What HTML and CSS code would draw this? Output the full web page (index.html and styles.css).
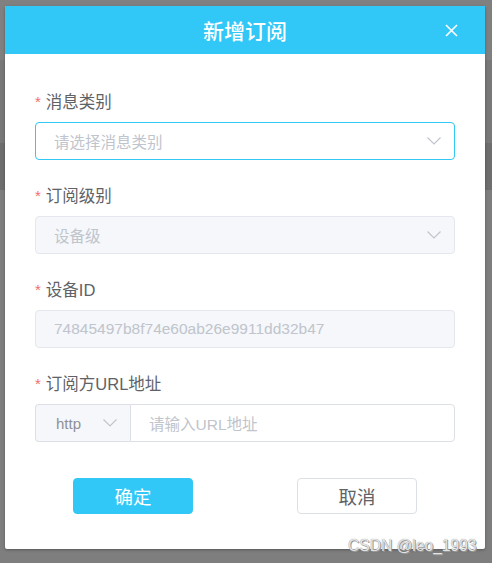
FILE: index.html
```html
<!DOCTYPE html>
<html lang="zh-CN">
<head>
    <meta charset="UTF-8">
    <meta name="viewport" content="width=device-width, initial-scale=1.0">
    <title>新增订阅</title>
    <link rel="stylesheet" href="styles.css">
</head>
<body>

    <div class="dialog">
        <div class="dialog-header">
            <span class="dialog-title">新增订阅</span>
            <button type="button" class="dialog-close" aria-label="关闭">
                <svg width="13" height="13" viewBox="0 0 13 13"><path d="M1 1L12 12M12 1L1 12" stroke="#fff" stroke-width="1.6" fill="none"/></svg>
            </button>
        </div>

        <form class="dialog-body" id="subscribeForm">
            <div class="form-item">
                <label class="form-label"><span class="star">*</span>消息类别</label>
                <div class="select is-focus">
                    <span class="placeholder">请选择消息类别</span>
                    <svg class="arrow" width="14" height="8" viewBox="0 0 14 8"><polyline points="0.5,0.5 7,7 13.5,0.5" fill="none" stroke="#c0c4cc" stroke-width="1.2"/></svg>
                </div>
            </div>

            <div class="form-item">
                <label class="form-label"><span class="star">*</span>订阅级别</label>
                <div class="select is-disabled">
                    <span class="placeholder">设备级</span>
                    <svg class="arrow" width="14" height="8" viewBox="0 0 14 8"><polyline points="0.5,0.5 7,7 13.5,0.5" fill="none" stroke="#c0c4cc" stroke-width="1.2"/></svg>
                </div>
            </div>

            <div class="form-item">
                <label class="form-label"><span class="star">*</span>设备ID</label>
                <div class="input is-disabled">
                    <span class="placeholder">74845497b8f74e60ab26e9911dd32b47</span>
                </div>
            </div>

            <div class="form-item">
                <label class="form-label"><span class="star">*</span>订阅方URL地址</label>
                <div class="input-group">
                    <div class="prepend">
                        <span class="prepend-text">http</span>
                        <svg class="arrow" width="14" height="8" viewBox="0 0 14 8"><polyline points="0.5,0.5 7,7 13.5,0.5" fill="none" stroke="#c0c4cc" stroke-width="1.2"/></svg>
                    </div>
                    <div class="input group-input">
                        <span class="placeholder">请输入URL地址</span>
                    </div>
                </div>
            </div>

            <div class="dialog-footer">
                <button type="button" class="btn btn-primary">确定</button>
                <button type="button" class="btn">取消</button>
            </div>
        </form>
    </div>

    <div class="watermark">CSDN @leo_1993</div>

</body>
</html>
```

FILE: styles.css
```css
* {
    box-sizing: border-box;
}
body {
    margin: 0;
    padding: 6px 0 0 5px;
    height: 563px;
    overflow: hidden;
    position: relative;
    font-family: "Liberation Sans", "Noto Sans CJK SC", sans-serif;
    background: linear-gradient(to bottom, #808080 0, #808080 60px, #787878 60px, #787878 143px, #6e6e6e 143px, #6e6e6e 190px, #7e7e7e 190px);
}
.dialog {
    width: 480px;
    background-color: #fff;
    border-radius: 2px;
    box-shadow: 0 1px 3px rgba(0, 0, 0, 0.3);
}
.dialog-header {
    height: 48px;
    background-color: #31c7f7;
    display: flex;
    align-items: center;
    justify-content: center;
    position: relative;
}
.dialog-title {
    color: #fff;
    font-size: 21px;
    font-weight: 500;
}
.dialog-close {
    position: absolute;
    right: 27px;
    top: 18px;
    padding: 0;
    border: none;
    background: none;
    line-height: 0;
    cursor: pointer;
}
.dialog-body {
    padding: 38px 30px 35px;
}
.form-item {
    margin-bottom: 26px;
}
.form-label {
    display: block;
    height: 20px;
    line-height: 20px;
    margin-bottom: 10px;
    font-size: 16.5px;
    color: #606266;
}
.star {
    color: #f56c6c;
    margin-right: 5px;
    font-size: 15px;
    vertical-align: 1px;
}
.select, .input {
    height: 38px;
    border: 1px solid #dcdfe6;
    border-radius: 4px;
    padding: 0 13px 0 18px;
    display: flex;
    align-items: center;
    justify-content: space-between;
    font-size: 15.5px;
}
.select.is-focus {
    border-color: #31c7f7;
}
.is-disabled {
    background-color: #f5f7fa;
    border-color: #e4e7ed;
}
.placeholder {
    color: #c0c4cc;
}
.input-group {
    display: flex;
    height: 38px;
}
.prepend {
    width: 95px;
    flex-shrink: 0;
    background-color: #f5f7fa;
    border: 1px solid #dcdfe6;
    border-right: none;
    border-radius: 4px 0 0 4px;
    display: flex;
    align-items: center;
    padding: 0 13px 0 20px;
    justify-content: space-between;
}
.prepend-text {
    font-size: 15px;
    color: #8e9096;
}
.group-input {
    flex: 1;
    border-radius: 0 4px 4px 0;
}
.dialog-footer {
    margin-top: 36px;
    padding: 0 38px;
    display: flex;
    justify-content: space-between;
}
.btn {
    width: 120px;
    height: 36px;
    border: 1px solid #dcdfe6;
    background-color: #fff;
    border-radius: 4px;
    font-family: "Liberation Sans", "Noto Sans CJK SC", sans-serif;
    font-size: 18.5px;
    color: #606266;
    cursor: pointer;
}
.btn-primary {
    background-color: #31c7f7;
    border-color: #31c7f7;
    color: #fff;
}
.watermark {
    position: absolute;
    left: 348px;
    top: 537px;
    font-size: 15.6px;
    color: #e4e4e4;
    text-shadow: 0 0 1px #888, 1px 1px 0 #999;
}
```
